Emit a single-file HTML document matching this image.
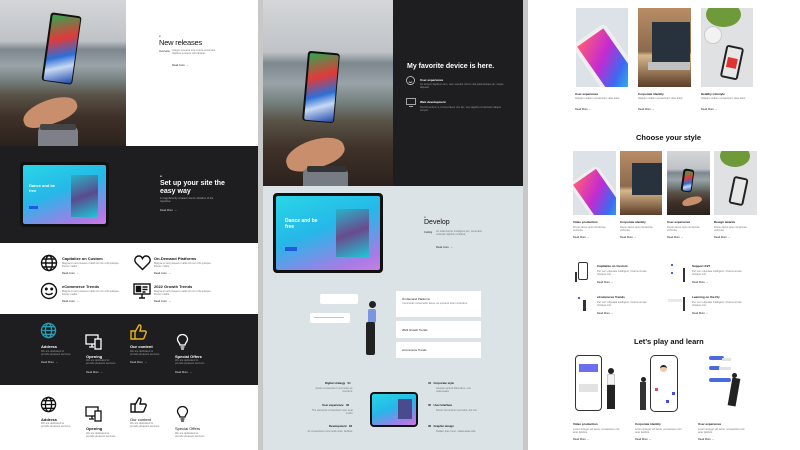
<!DOCTYPE html>
<html><head><meta charset="utf-8"><style>
*{margin:0;padding:0;box-sizing:border-box}
body{width:800px;height:450px;overflow:hidden;background:#fff;font-family:"Liberation Sans",sans-serif;position:relative}
.a{position:absolute}
.t{position:absolute;font-weight:bold;font-size:4px;color:#111;white-space:nowrap}
.w{color:#fff}
.p{position:absolute;font-size:2.6px;line-height:3.4px;color:#777}
.r{position:absolute;font-size:2.6px;color:#222;white-space:nowrap}
.photo{position:absolute;overflow:hidden;background:linear-gradient(180deg,#d4d6d9 0%,#bfc3c7 28%,#7d878e 34%,#9aa3a8 45%,#75807f 55%,#5a5347 65%,#3e3129 80%,#2c221d 100%)}
.phone{position:absolute;background:#111;border-radius:3px;transform:rotate(8deg)}
.phone i{position:absolute;inset:1.5px;border-radius:2px;background:linear-gradient(160deg,#2fa84f,#e03a3a 35%,#2d6fd6 60%,#c7d9f3 75%,#1d47a8)}
.hand{position:absolute;background:#c98f6c;border-radius:50% 50% 40% 40%}
.tab{position:absolute;background:#111;border-radius:4px;padding:3px}
.tab>div{width:100%;height:100%;border-radius:2px;background:linear-gradient(160deg,#28d6e6,#26b7e8 45%,#a77be6 85%,#c77fe0);position:relative;overflow:hidden}
.gray{background:#c8c8c8}
.img{position:absolute;overflow:hidden}
</style></head><body>

<!-- LEFT COLUMN -->
<div class="photo" style="left:0;top:0;width:126px;height:146px">
 <div class="phone" style="left:46px;top:14px;width:31px;height:69px"><i></i></div>
 <div class="hand" style="left:22px;top:100px;width:56px;height:24px;transform:rotate(-20deg)"></div>
 <div class="a" style="left:38px;top:126px;width:40px;height:20px;background:#7d8089;border-radius:6px 6px 0 0"></div>
 <div class="a" style="left:40px;top:124px;width:36px;height:6px;background:#444;border-radius:2px"></div>
</div>
<div class="t" style="left:159px;top:36px;font-size:2px;color:#555">01</div>
<div class="t" style="left:159px;top:38px;font-size:7.5px;font-weight:normal;color:#111;letter-spacing:-.2px">New releases</div>
<div class="r" style="left:159px;top:50px">Overview</div>
<div class="p" style="left:172px;top:49px;width:50px">Integer posuere erat a ante venenatis dapibus posuere velit aliquet.</div>
<div class="r" style="left:172px;top:64px">Read more &nbsp;→</div>

<div class="a" style="left:0;top:146px;width:258px;height:97px;background:#1e1e20"></div>
<div class="tab" style="left:20px;top:162px;width:89px;height:65px"><div>
 <div class="t w" style="left:6px;top:18px;font-size:4px">Dance and be<br>free</div>
 <div class="a" style="left:6px;top:41px;width:9px;height:3px;background:#1e5ae0"></div>
 <div class="a" style="left:48px;top:10px;width:27px;height:42px;background:linear-gradient(160deg,#27b4c7,#5a4a8e,#1ec7d6)"></div>
</div></div>
<div class="t w" style="left:160px;top:176px;font-size:2px">01</div>
<div class="t w" style="left:160px;top:180px;font-size:7px;line-height:7.5px">Set up your site the<br>easy way</div>
<div class="p" style="left:160px;top:197px;width:60px;color:#aaa">A magnificently created cosmic rebellion of the repulsive.</div>
<div class="r" style="left:160px;top:209px;color:#ddd">Read More &nbsp;→</div>

<!-- icon section 1 -->
<svg class="a" style="left:40px;top:254px" width="18" height="18" viewBox="0 0 18 18" fill="none" stroke="#111" stroke-width="1.4"><circle cx="9" cy="9" r="7.5"/><ellipse cx="9" cy="9" rx="3.3" ry="7.5"/><path d="M1.5 9h15M3 5h12M3 13h12"/></svg>
<div class="t" style="left:62px;top:256px">Capitalize on Custom</div>
<div class="p" style="left:62px;top:262px;width:58px">Magna et sed posuere mattis sit non orbi quisque. Donec mattis.</div>
<div class="r" style="left:62px;top:272px">Read more &nbsp;→</div>
<svg class="a" style="left:134px;top:255px" width="17" height="16" viewBox="0 0 17 16" fill="none" stroke="#111" stroke-width="1.4"><path d="M8.5 14.5 2 8C-.5 5 1.5 1 5 1c2 0 3 1.5 3.5 2.5C9 2.5 10 1 12 1c3.5 0 5.5 4 3 7z"/></svg>
<div class="t" style="left:154px;top:256px">On-Demand Platforms</div>
<div class="p" style="left:154px;top:262px;width:58px">Magna et sed posuere mattis sit non orbi quisque. Donec mattis.</div>
<div class="r" style="left:154px;top:272px">Read more &nbsp;→</div>
<svg class="a" style="left:40px;top:282px" width="18" height="18" viewBox="0 0 18 18" fill="none" stroke="#111" stroke-width="1.4"><circle cx="9" cy="9" r="7.5"/><circle cx="6.3" cy="7" r=".8" fill="#111"/><circle cx="11.7" cy="7" r=".8" fill="#111"/><path d="M5.5 11c1.5 2 5.5 2 7 0"/></svg>
<div class="t" style="left:62px;top:284px">eCommerce Trends</div>
<div class="p" style="left:62px;top:290px;width:58px">Magna et sed posuere mattis sit non orbi quisque. Donec mattis.</div>
<div class="r" style="left:62px;top:300px">Read more &nbsp;→</div>
<svg class="a" style="left:133px;top:283px" width="18" height="16" viewBox="0 0 18 16" fill="none" stroke="#111" stroke-width="1.4"><rect x="1" y="1" width="16" height="10"/><path d="M6 15h6M9 11v4"/><rect x="3.5" y="3.5" width="4" height="5" fill="#111"/><path d="M9.5 4h5M9.5 6.5h5M9.5 9h3"/></svg>
<div class="t" style="left:154px;top:284px">2022 Growth Trends</div>
<div class="p" style="left:154px;top:290px;width:58px">Magna et sed posuere mattis sit non orbi quisque. Donec mattis.</div>
<div class="r" style="left:154px;top:300px">Read more &nbsp;→</div>

<!-- dark icons -->
<div class="a" style="left:0;top:314px;width:258px;height:71px;background:#1e1e20"></div>
<svg class="a" style="left:40px;top:322px" width="17" height="17" viewBox="0 0 18 18" fill="none" stroke="#2a9bb0" stroke-width="1.4"><circle cx="9" cy="9" r="7.5"/><ellipse cx="9" cy="9" rx="3.3" ry="7.5"/><path d="M1.5 9h15M3 5h12M3 13h12"/></svg>
<div class="t w" style="left:41px;top:344px">Address</div>
<div class="p" style="left:41px;top:350px;width:32px;color:#999">We are dedicated to provide pleasant services.</div>
<div class="r" style="left:41px;top:361px;color:#ddd">Read More &nbsp;→</div>
<svg class="a" style="left:85px;top:334px" width="17" height="16" viewBox="0 0 17 16" fill="none" stroke="#fff" stroke-width="1.3"><rect x="1" y="1" width="12" height="9"/><path d="M4 13h5M7 10v3"/><rect x="10" y="5" width="6" height="10" fill="#1e1e20"/></svg>
<div class="t w" style="left:86px;top:354px">Opening</div>
<div class="p" style="left:86px;top:359px;width:32px;color:#999">We are dedicated to provide pleasant services.</div>
<div class="r" style="left:86px;top:371px;color:#ddd">Read More &nbsp;→</div>
<svg class="a" style="left:130px;top:324px" width="17" height="16" viewBox="0 0 17 16" fill="none" stroke="#e7b321" stroke-width="1.4"><path d="M1 7h4v8H1zM5 8l4-7c1.5 0 2 1 2 2l-1 4h5c1 0 1.5 1 1 2l-2 5c-.3 1-1 1-2 1H5"/></svg>
<div class="t w" style="left:130px;top:344px">Our content</div>
<div class="p" style="left:130px;top:350px;width:32px;color:#999">We are dedicated to provide pleasant services.</div>
<div class="r" style="left:130px;top:361px;color:#ddd">Read More &nbsp;→</div>
<svg class="a" style="left:175px;top:334px" width="15" height="16" viewBox="0 0 15 16" fill="none" stroke="#fff" stroke-width="1.3"><path d="M5 11c0-2-2.5-3-2.5-5.5a5 5 0 0 1 10 0C12.5 8 10 9 10 11zM5.5 13h4M6 15h3"/></svg>
<div class="t w" style="left:175px;top:354px">Special Offers</div>
<div class="p" style="left:175px;top:359px;width:32px;color:#999">We are dedicated to provide pleasant services.</div>
<div class="r" style="left:175px;top:371px;color:#ddd">Read More &nbsp;→</div>

<!-- white icons -->
<svg class="a" style="left:40px;top:396px" width="17" height="17" viewBox="0 0 18 18" fill="none" stroke="#111" stroke-width="1.4"><circle cx="9" cy="9" r="7.5"/><ellipse cx="9" cy="9" rx="3.3" ry="7.5"/><path d="M1.5 9h15M3 5h12M3 13h12"/></svg>
<div class="t" style="left:41px;top:417px">Address</div>
<div class="p" style="left:41px;top:422px;width:32px">We are dedicated to provide pleasant services.</div>
<svg class="a" style="left:85px;top:406px" width="17" height="16" viewBox="0 0 17 16" fill="none" stroke="#111" stroke-width="1.3"><rect x="1" y="1" width="12" height="9"/><path d="M4 13h5M7 10v3"/><rect x="10" y="5" width="6" height="10" fill="#fff"/></svg>
<div class="t" style="left:86px;top:426px">Opening</div>
<div class="p" style="left:86px;top:432px;width:32px">We are dedicated to provide pleasant services.</div>
<svg class="a" style="left:130px;top:397px" width="17" height="16" viewBox="0 0 17 16" fill="none" stroke="#111" stroke-width="1.4"><path d="M1 7h4v8H1zM5 8l4-7c1.5 0 2 1 2 2l-1 4h5c1 0 1.5 1 1 2l-2 5c-.3 1-1 1-2 1H5"/></svg>
<div class="t" style="left:130px;top:417px;font-weight:normal">Our content</div>
<div class="p" style="left:130px;top:422px;width:32px">We are dedicated to provide pleasant services.</div>
<svg class="a" style="left:175px;top:406px" width="15" height="16" viewBox="0 0 15 16" fill="none" stroke="#111" stroke-width="1.3"><path d="M5 11c0-2-2.5-3-2.5-5.5a5 5 0 0 1 10 0C12.5 8 10 9 10 11zM5.5 13h4M6 15h3"/></svg>
<div class="t" style="left:175px;top:426px;font-weight:normal">Special Offers</div>
<div class="p" style="left:175px;top:432px;width:32px">We are dedicated to provide pleasant services.</div>

<!-- separators -->
<div class="a gray" style="left:258px;top:0;width:5px;height:450px"></div>
<div class="a gray" style="left:523px;top:0;width:5px;height:450px"></div>

<!-- MIDDLE COLUMN -->
<div class="photo" style="left:263px;top:0;width:130px;height:186px">
 <div class="phone" style="left:42px;top:52px;width:32px;height:70px;transform:rotate(5deg)"><i></i></div>
 <div class="hand" style="left:22px;top:140px;width:60px;height:28px;transform:rotate(-18deg)"></div>
 <div class="a" style="left:40px;top:168px;width:45px;height:18px;background:#777b84;border-radius:6px 6px 0 0"></div>
 <div class="a" style="left:44px;top:166px;width:40px;height:6px;background:#333;border-radius:2px"></div>
</div>
<div class="a" style="left:393px;top:0;width:130px;height:186px;background:#1e1e20"></div>
<div class="t w" style="left:407px;top:63px;font-size:7px">My favorite device is here.</div>
<svg class="a" style="left:406px;top:76px" width="9" height="9" viewBox="0 0 9 9" fill="none" stroke="#ddd" stroke-width=".7"><circle cx="4.5" cy="4.5" r="4"/><path d="M2.8 5.6c1 1 2.4 1 3.4 0"/></svg>
<div class="t w" style="left:420px;top:78px;font-size:3px">User experience</div>
<div class="p" style="left:420px;top:83px;width:90px;color:#999">An tempor dapibus sem, nam suscipit rutrum nisl pellentesque ac, neque aliquam.</div>
<svg class="a" style="left:406px;top:98px" width="10" height="9" viewBox="0 0 10 9" fill="none" stroke="#ddd" stroke-width=".7"><rect x=".5" y=".5" width="9" height="6"/><path d="M3 8.5h4"/></svg>
<div class="t w" style="left:420px;top:100px;font-size:3px">Web development</div>
<div class="p" style="left:420px;top:106px;width:90px;color:#999">Nis fermentum a, id nissl lacus non lac, nec sagittis consectetur aliquet tempor.</div>

<div class="a" style="left:263px;top:186px;width:260px;height:264px;background:#dce3e6"></div>
<div class="tab" style="left:273px;top:193px;width:110px;height:80px"><div>
 <div class="t w" style="left:9px;top:23px;font-size:5px;line-height:5.5px">Dance and be<br>free</div>
 <div class="a" style="left:9px;top:51px;width:12px;height:4px;background:#1e5ae0"></div>
 <div class="a" style="left:60px;top:13px;width:33px;height:48px;background:linear-gradient(160deg,#27b4c7,#6a4a8e 50%,#1ec7d6)"></div>
</div></div>
<div class="t" style="left:424px;top:217px;font-size:2px;color:#555">01</div>
<div class="t" style="left:424px;top:219px;font-size:7px;font-weight:normal">Develop</div>
<div class="r" style="left:424px;top:231px">Coding</div>
<div class="p" style="left:436px;top:230px;width:50px">Ac ullamcorper intelligent per, venenatis molestie dapibus volutpat.</div>
<div class="r" style="left:436px;top:246px">Read more &nbsp;→</div>

<div class="a" style="left:320px;top:294px;width:38px;height:10px;background:#fff;border-radius:2px"></div>
<div class="a" style="left:310px;top:313px;width:40px;height:10px;background:#fff;border-radius:2px"></div>
<div class="a" style="left:314px;top:317px;width:30px;height:1px;background:#b7c4e8"></div>
<div class="a" style="left:369px;top:301px;width:7px;height:7px;background:#222;border-radius:50%"></div>
<div class="a" style="left:368px;top:309px;width:8px;height:14px;background:#7b96e0;border-radius:2px"></div>
<div class="a" style="left:366px;top:322px;width:9px;height:33px;background:#222;border-radius:2px"></div>
<div class="a" style="left:396px;top:291px;width:85px;height:26px;background:#fff"></div>
<div class="t" style="left:402px;top:297px;font-size:2.8px;font-weight:normal">On-Demand Platforms</div>
<div class="p" style="left:402px;top:302px;width:70px">Commodo consectetur lacus, ac posuere lorem interdum.</div>
<div class="a" style="left:396px;top:321px;width:85px;height:17px;background:#fff"></div>
<div class="t" style="left:402px;top:328px;font-size:2.8px;font-weight:normal">2022 Growth Trends</div>
<div class="a" style="left:396px;top:342px;width:85px;height:16px;background:#fff"></div>
<div class="t" style="left:402px;top:348px;font-size:2.8px;font-weight:normal">eCommerce Trends</div>

<div class="tab" style="left:370px;top:392px;width:48px;height:35px;padding:2px"><div>
 <div class="a" style="left:26px;top:5px;width:14px;height:20px;background:#4a4a8e"></div></div></div>
<div class="t" style="left:325px;top:381px;font-size:2.8px">Digital strategy &nbsp; 01</div>
<div class="p" style="left:310px;top:387px;width:43px;text-align:right">Quam consectetur commodo ac, tincidunt.</div>
<div class="t" style="left:322px;top:403px;font-size:2.8px">User experience &nbsp; 02</div>
<div class="p" style="left:310px;top:409px;width:43px;text-align:right">The elements consectetur sed, ante morbi.</div>
<div class="t" style="left:329px;top:424px;font-size:2.8px">Development &nbsp; 03</div>
<div class="p" style="left:305px;top:430px;width:48px;text-align:right">Ac consectetur commodo ante, facilisis.</div>
<div class="t" style="left:428px;top:381px;font-size:2.8px">04 &nbsp; Corporate style</div>
<div class="p" style="left:436px;top:387px;width:44px">Aenean lacinia bibendum, nisl malesuada.</div>
<div class="t" style="left:428px;top:403px;font-size:2.8px">05 &nbsp; User Interface</div>
<div class="p" style="left:436px;top:409px;width:44px">Donec fermentum sed odio, dui nisl.</div>
<div class="t" style="left:428px;top:424px;font-size:2.8px">06 &nbsp; Graphic design</div>
<div class="p" style="left:436px;top:430px;width:44px">Nullam quis risus, malesuada odio.</div>

<!-- RIGHT COLUMN -->
<div class="img" style="left:576px;top:8px;width:52px;height:79px;background:#dde2e8">
 <div class="a" style="left:12px;top:20px;width:40px;height:70px;border-radius:5px;background:#eee;transform:rotate(-35deg)"><div class="a" style="inset:4px;background:linear-gradient(150deg,#ff5a7a,#c32bd0 40%,#3d6af0 70%,#27d0e0)"></div></div>
</div>
<div class="img" style="left:638px;top:8px;width:53px;height:79px;background:linear-gradient(180deg,#b88d66,#8c6a4d 55%,#d7b78b 60%,#5b3c27)">
 <div class="a" style="left:14px;top:14px;width:38px;height:40px;background:#27323d"></div>
 <div class="a" style="left:10px;top:54px;width:42px;height:8px;background:#c0c0c0"></div>
</div>
<div class="img" style="left:701px;top:8px;width:52px;height:79px;background:#dfe1e3">
 <div class="a" style="left:5px;top:-6px;width:35px;height:25px;background:#6f9a3a;border-radius:50%"></div>
 <div class="a" style="left:3px;top:18px;width:18px;height:18px;border-radius:50%;background:#f2f2f2;border:1px solid #ccc"></div>
 <div class="a" style="left:22px;top:38px;width:18px;height:33px;background:#222;border-radius:3px;transform:rotate(12deg)"><div class="a" style="inset:2px;background:#e7e7e7"><div class="a" style="left:2px;top:10px;width:10px;height:10px;background:#d33"></div></div></div>
</div>
<div class="t" style="left:575px;top:92px;font-size:3px">User experience</div>
<div class="p" style="left:575px;top:97px;width:50px">Aliquam nullam consectetur vitae dolor.</div>
<div class="r" style="left:575px;top:108px">Read More →</div>
<div class="t" style="left:638px;top:92px;font-size:3px">Corporate identity</div>
<div class="p" style="left:638px;top:97px;width:50px">Aliquam nullam consectetur vitae dolor.</div>
<div class="r" style="left:638px;top:108px">Read More →</div>
<div class="t" style="left:701px;top:92px;font-size:3px">Healthy Lifestyle</div>
<div class="p" style="left:701px;top:97px;width:50px">Aliquam nullam consectetur vitae dolor.</div>
<div class="r" style="left:701px;top:108px">Read More →</div>

<div class="t" style="left:636px;top:133px;font-size:7.5px">Choose your style</div>
<div class="img" style="left:573px;top:151px;width:43px;height:64px;background:#dde2e8">
 <div class="a" style="left:10px;top:18px;width:34px;height:60px;border-radius:5px;background:#eee;transform:rotate(-35deg)"><div class="a" style="inset:3px;background:linear-gradient(150deg,#ff5a7a,#c32bd0 40%,#3d6af0 70%,#27d0e0)"></div></div>
</div>
<div class="img" style="left:620px;top:151px;width:42px;height:64px;background:linear-gradient(180deg,#b88d66,#8c6a4d 55%,#d7b78b 62%,#5b3c27)">
 <div class="a" style="left:12px;top:12px;width:30px;height:32px;background:#27323d"></div>
</div>
<div class="photo" style="left:667px;top:151px;width:43px;height:64px">
 <div class="phone" style="left:15px;top:18px;width:11px;height:23px"><i></i></div>
 <div class="hand" style="left:15px;top:46px;width:20px;height:8px;transform:rotate(-15deg)"></div>
</div>
<div class="img" style="left:714px;top:151px;width:43px;height:64px;background:#dfe1e3">
 <div class="a" style="left:6px;top:-6px;width:30px;height:22px;background:#6f9a3a;border-radius:50%"></div>
 <div class="a" style="left:17px;top:26px;width:15px;height:28px;background:#222;border-radius:3px;transform:rotate(12deg)"><div class="a" style="inset:2px;background:#e7e7e7"></div></div>
</div>
<div class="t" style="left:573px;top:220px;font-size:3px">Video production</div>
<div class="t" style="left:620px;top:220px;font-size:3px">Corporate identity</div>
<div class="t" style="left:667px;top:220px;font-size:3px">User experience</div>
<div class="t" style="left:714px;top:220px;font-size:3px">Design awards</div>
<div class="p" style="left:573px;top:226px;width:40px">Donec lacus quis nisl lacinia vehicula.</div>
<div class="p" style="left:620px;top:226px;width:40px">Donec lacus quis nisl lacinia vehicula.</div>
<div class="p" style="left:667px;top:226px;width:40px">Donec lacus quis nisl lacinia vehicula.</div>
<div class="p" style="left:714px;top:226px;width:40px">Donec lacus quis nisl lacinia vehicula.</div>
<div class="r" style="left:573px;top:236px">Read More →</div>
<div class="r" style="left:620px;top:236px">Read More →</div>
<div class="r" style="left:667px;top:236px">Read More →</div>
<div class="r" style="left:714px;top:236px">Read More →</div>

<!-- features -->
<div class="a" style="left:578px;top:262px;width:10px;height:18px;border:1px solid #333;border-radius:2px"></div>
<div class="a" style="left:575px;top:272px;width:2px;height:10px;background:#333"></div>
<div class="t" style="left:597px;top:264px;font-size:3px">Capitalize on Custom</div>
<div class="p" style="left:597px;top:270px;width:55px">Per nec vulputate intelligent, Viverra ornare tristique nisl.</div>
<div class="r" style="left:597px;top:281px">Read More →</div>
<div class="a" style="left:671px;top:264px;width:2px;height:2px;background:#4a5fe0"></div>
<div class="a" style="left:671px;top:272px;width:2px;height:2px;background:#4a5fe0"></div>
<div class="a" style="left:683px;top:268px;width:2px;height:14px;background:#333"></div>
<div class="t" style="left:692px;top:264px;font-size:3px">Support 24/7</div>
<div class="p" style="left:692px;top:270px;width:55px">Per nec vulputate intelligent, Viverra ornare tristique nisl.</div>
<div class="r" style="left:692px;top:281px">Read More →</div>
<div class="a" style="left:578px;top:297px;width:2px;height:2px;background:#4a5fe0"></div>
<div class="a" style="left:583px;top:300px;width:3px;height:11px;background:#333"></div>
<div class="t" style="left:597px;top:295px;font-size:3px">eCommerce Trends</div>
<div class="p" style="left:597px;top:301px;width:55px">Per nec vulputate intelligent, Viverra ornare tristique nisl.</div>
<div class="r" style="left:597px;top:312px">Read More →</div>
<div class="a" style="left:668px;top:299px;width:14px;height:3px;background:#e8e8ee"></div>
<div class="a" style="left:683px;top:297px;width:2px;height:14px;background:#333"></div>
<div class="t" style="left:692px;top:295px;font-size:3px">Learning on the Fly</div>
<div class="p" style="left:692px;top:301px;width:55px">Per nec vulputate intelligent, Viverra ornare tristique nisl.</div>
<div class="r" style="left:692px;top:312px">Read More →</div>

<div class="t" style="left:634px;top:337px;font-size:7.5px">Let’s play and learn</div>
<div class="a" style="left:575px;top:355px;width:27px;height:56px;border:1.5px solid #333;border-radius:4px"></div>
<div class="a" style="left:579px;top:364px;width:19px;height:8px;background:#6b6ef0"></div>
<div class="a" style="left:579px;top:384px;width:19px;height:8px;background:#e2e2e2"></div>
<div class="a" style="left:608px;top:368px;width:6px;height:6px;background:#222;border-radius:50%"></div>
<div class="a" style="left:607px;top:374px;width:8px;height:11px;background:#f3f3f3;border:.5px solid #ccc"></div>
<div class="a" style="left:607px;top:385px;width:8px;height:24px;background:#222"></div>
<div class="a" style="left:650px;top:355px;width:28px;height:57px;border:1.5px solid #333;border-radius:5px"></div>
<div class="a" style="left:660px;top:365px;width:7px;height:7px;background:#f0c9a8;border-radius:50%;border-top:2px solid #222"></div>
<div class="a" style="left:655px;top:388px;width:3px;height:3px;background:#e04a6a"></div>
<div class="a" style="left:672px;top:392px;width:3px;height:3px;background:#4a4ae0"></div>
<div class="a" style="left:666px;top:400px;width:3px;height:3px;background:#4a4ae0"></div>
<div class="a" style="left:641px;top:377px;width:5px;height:5px;background:#222;border-radius:50%"></div>
<div class="a" style="left:640px;top:382px;width:6px;height:28px;background:#333"></div>
<div class="a" style="left:709px;top:356px;width:15px;height:4px;background:#4a6ae0;border-radius:2px"></div>
<div class="a" style="left:722px;top:358px;width:9px;height:3px;background:#e2e2e2"></div>
<div class="a" style="left:709px;top:366px;width:11px;height:4px;background:#4a6ae0;border-radius:2px"></div>
<div class="a" style="left:719px;top:367px;width:12px;height:3px;background:#e2e2e2"></div>
<div class="a" style="left:709px;top:378px;width:22px;height:4px;background:#4a6ae0;border-radius:2px"></div>
<div class="a" style="left:732px;top:373px;width:5px;height:5px;background:#222;border-radius:50%"></div>
<div class="a" style="left:730px;top:378px;width:8px;height:28px;background:#222;transform:rotate(10deg)"></div>
<div class="t" style="left:573px;top:422px;font-size:3px">Video production</div>
<div class="t" style="left:635px;top:422px;font-size:3px">Corporate identity</div>
<div class="t" style="left:698px;top:422px;font-size:3px">User experience</div>
<div class="p" style="left:573px;top:428px;width:52px">Lorem integer vel lacus, consectetur nisl ante facilisis.</div>
<div class="p" style="left:635px;top:428px;width:52px">Lorem integer vel lacus, consectetur nisl ante facilisis.</div>
<div class="p" style="left:698px;top:428px;width:52px">Lorem integer vel lacus, consectetur nisl ante facilisis.</div>
<div class="r" style="left:573px;top:438px">Read More →</div>
<div class="r" style="left:635px;top:438px">Read More →</div>
<div class="r" style="left:698px;top:438px">Read More →</div>
</body></html>
